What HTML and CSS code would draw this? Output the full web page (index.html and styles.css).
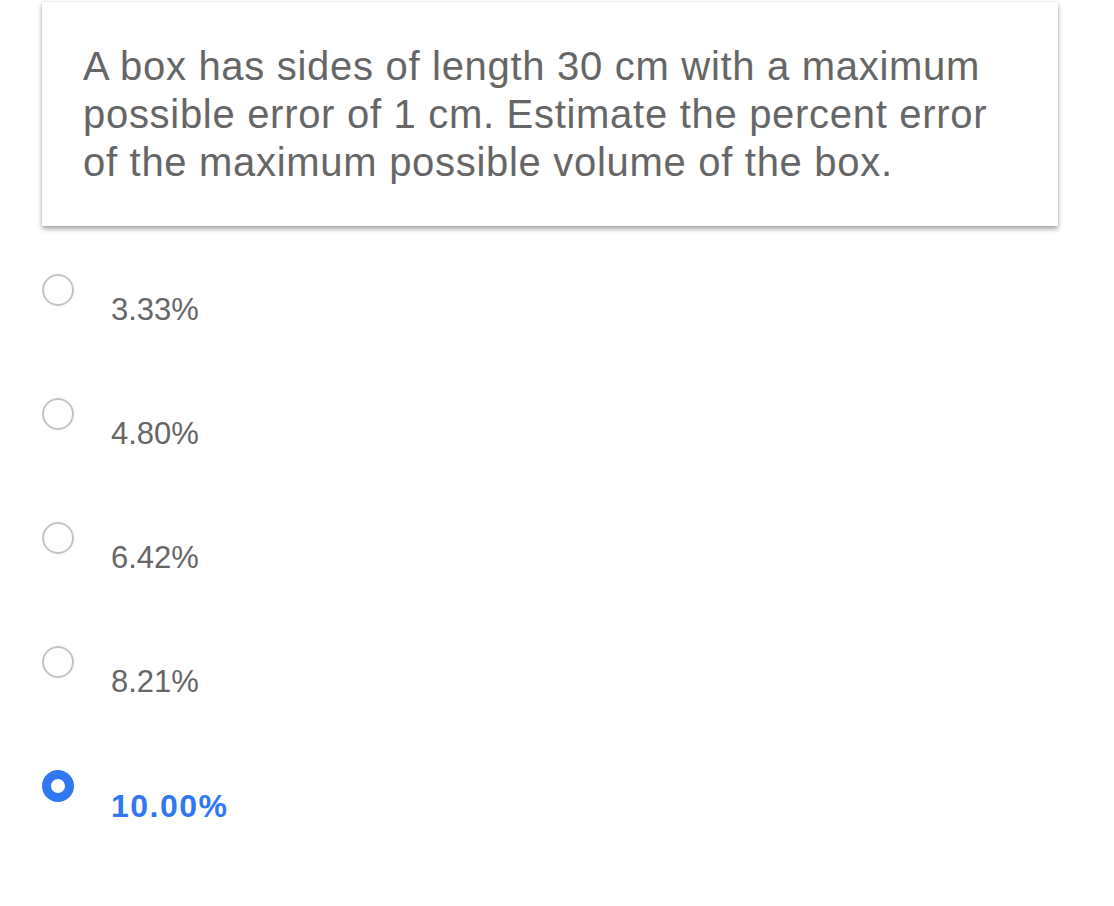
FILE: index.html
```html
<!DOCTYPE html>
<html>
<head>
<meta charset="utf-8">
<link rel="stylesheet" href="styles.css">
</head>
<body>
<div class="page">
  <div class="card">
    <p class="question">A box has sides of length 30 cm with a maximum possible error of 1 cm. Estimate the percent error of the maximum possible volume of the box.</p>
  </div>
  <ul class="options">
    <li class="option"><span class="radio"></span><span class="label">3.33%</span></li>
    <li class="option"><span class="radio"></span><span class="label">4.80%</span></li>
    <li class="option"><span class="radio"></span><span class="label">6.42%</span></li>
    <li class="option"><span class="radio"></span><span class="label">8.21%</span></li>
    <li class="option selected"><span class="radio"></span><span class="label">10.00%</span></li>
  </ul>
</div>
</body>
</html>
```

FILE: styles.css
```css
html, body {
  margin: 0;
  padding: 0;
  background: #fff;
}
body {
  font-family: "Liberation Sans", Arial, sans-serif;
  color: #666;
}
.page {
  padding: 2px 56px 0 42px;
}
.card {
  background: #fff;
  box-shadow: 0 3px 5px rgba(0, 0, 0, 0.35), 0 0 2px rgba(0, 0, 0, 0.12);
  padding: 40px 54px 38px 41px;
  height: 146px;
}
.question {
  margin: 0;
  font-size: 40px;
  line-height: 48px;
  letter-spacing: 0.7px;
  color: #666;
}
.options {
  list-style: none;
  margin: 48px 0 0 0;
  padding: 0;
}
.option {
  display: flex;
  align-items: flex-start;
  height: 124px;
}
.radio {
  box-sizing: border-box;
  width: 32px;
  height: 32px;
  border-radius: 50%;
  border: 2px solid #c4c4c4;
  flex: none;
}
.label {
  margin-left: 37px;
  margin-top: 18px;
  font-size: 31px;
  line-height: 36px;
}
.selected .radio {
  border: 9px solid #2f78f2;
}
.selected .label {
  color: #2f78f2;
  font-weight: bold;
  font-size: 32px;
  letter-spacing: 1.5px;
}
```
